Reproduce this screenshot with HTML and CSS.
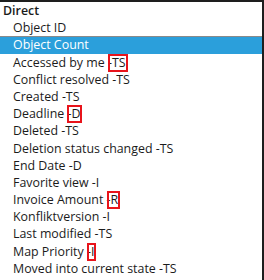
FILE: index.html
```html
<!DOCTYPE html>
<html lang="en">

<head>
    <meta charset="UTF-8">
    <meta name="viewport" content="width=device-width, initial-scale=1.0">
    <title>Field list</title>
    <link rel="stylesheet" href="styles.css">
</head>

<body>
    <div class="list">
        <div class="group">Direct</div>
        <div class="item">Object ID</div>
        <div class="item selected">Object Count</div>
        <div class="item">Accessed by me <span class="mark">-TS</span></div>
        <div class="item">Conflict resolved -TS</div>
        <div class="item">Created -TS</div>
        <div class="item">Deadline <span class="mark">-D</span></div>
        <div class="item">Deleted -TS</div>
        <div class="item">Deletion status changed -TS</div>
        <div class="item">End Date -D</div>
        <div class="item">Favorite view -I</div>
        <div class="item">Invoice Amount <span class="mark">-R</span></div>
        <div class="item">Konfliktversion -I</div>
        <div class="item">Last modified -TS</div>
        <div class="item">Map Priority <span class="mark">-I</span></div>
        <div class="item">Moved into current state -TS</div>
    </div>
</body>

</html>
```

FILE: styles.css
```css
body {
    margin: 0;
    background: white;
    font-family: "Open Sans", "Noto Sans", sans-serif;
    font-size: 12.4px;
    color: #1b1b1b;
}

.list {
    height: 278px;
    border-top: 2px solid #1e1e1e;
    border-right: 2px solid #1e1e1e;
    overflow: hidden;
}

.group, .item {
    height: 17.2px;
    line-height: 17.2px;
    white-space: nowrap;
}

.group {
    padding-left: 3px;
    font-weight: 600;
}

.item {
    padding-left: 13px;
}

.selected {
    background-color: #2b9fdb;
    color: white;
    box-shadow: inset 0 1px 0 #8a8a8a;
}

.mark {
    display: inline-block;
    vertical-align: top;
    height: 18px;
    line-height: 17.2px;
    padding: 0 2px 0 0;
    outline: 2px solid #e8141b;
    outline-offset: -2px;
    background: white;
}
```
